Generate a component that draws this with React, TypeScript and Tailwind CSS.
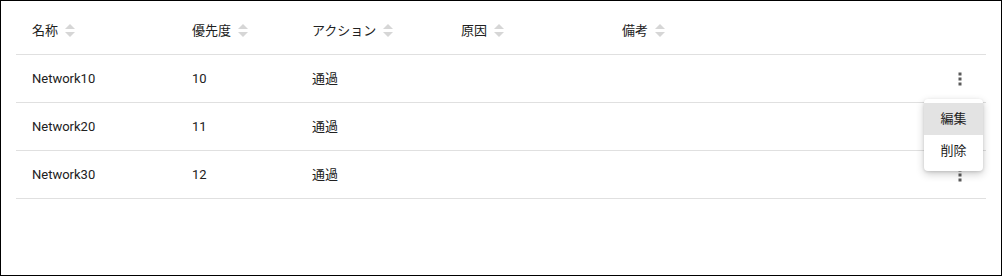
import React from "react";

const SortIcon = () => (
  <svg width="10" height="14" viewBox="0 0 10 14" className="ml-[7px]">
    <polygon points="5,0 10,5 0,5" fill="#d6d6d6" />
    <polygon points="0,8 10,8 5,13" fill="#d6d6d6" />
  </svg>
);

const Kebab = () => (
  <svg width="4" height="14" viewBox="0 0 4 14">
    <rect x="0.5" y="0.5" width="3" height="3" fill="#5a5a5a" />
    <rect x="0.5" y="5.5" width="3" height="3" fill="#5a5a5a" />
    <rect x="0.5" y="10.5" width="3" height="3" fill="#5a5a5a" />
  </svg>
);

const cols = ["w-[160px]", "w-[120px]", "w-[149px]", "w-[161px]", "flex-1"];
const headers = ["名称", "優先度", "アクション", "原因", "備考"];
const rows = [
  ["Network10", "10", "通過"],
  ["Network20", "11", "通過"],
  ["Network30", "12", "通過"],
];

export default function App() {
  return (
    <div
      className="relative w-[1002px] h-[276px] border border-black bg-white px-[15px] pt-[6px] text-[13px] text-[#212121]"
      style={{ fontFamily: 'Roboto, "Noto Sans CJK JP", sans-serif' }}
    >
      <div className="flex h-[48px] items-center border-b border-[#e0e0e0]">
        {headers.map((h, i) => (
          <div key={h} className={`${cols[i]} flex items-center pl-[16px]`}>
            <span>{h}</span>
            <SortIcon />
          </div>
        ))}
        <div className="w-[60px]" />
      </div>
      {rows.map((r) => (
        <div key={r[0]} className="flex h-[48px] items-center border-b border-[#e0e0e0]">
          <div className={`${cols[0]} pl-[16px]`}>{r[0]}</div>
          <div className={`${cols[1]} pl-[16px]`}>{r[1]}</div>
          <div className={`${cols[2]} pl-[16px]`}>{r[2]}</div>
          <div className={`${cols[3]} pl-[16px]`} />
          <div className={`${cols[4]} pl-[16px]`} />
          <div className="flex w-[60px] items-center justify-center pl-[8px]">
            <Kebab />
          </div>
        </div>
      ))}
      <div className="absolute left-[923px] top-[98px] w-[59px] rounded-[4px] bg-white py-[4px] shadow-[0_3px_8px_rgba(0,0,0,0.2),0_1px_3px_rgba(0,0,0,0.12)]">
        <div className="flex h-[32px] items-center justify-center bg-[#e3e3e3]">編集</div>
        <div className="flex h-[32px] items-center justify-center">削除</div>
      </div>
    </div>
  );
}
